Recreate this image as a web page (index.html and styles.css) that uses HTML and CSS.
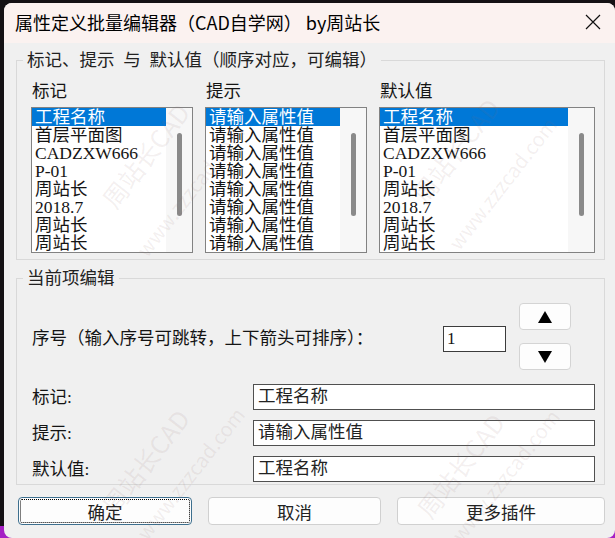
FILE: index.html
```html
<!DOCTYPE html>
<html lang="zh-CN">
<head>
  <meta charset="UTF-8">
  <title>属性定义批量编辑器</title>
  <link rel="stylesheet" href="styles.css">
</head>
<body>
  <div class="window">
    <div class="titlebar">
      <span class="title">属性定义批量编辑器（CAD自学网） by周站长</span>
      <svg class="close" width="16" height="16" viewBox="0 0 16 16">
        <path d="M1 1 L15 15 M15 1 L1 15" stroke="#111" stroke-width="1.2" fill="none"/>
      </svg>
    </div>
    <div class="body">
      <fieldset class="group">
        <legend>标记、提示&ensp;与&ensp;默认值（顺序对应，可编辑）</legend>
        <div class="lists">
          <div class="col">
            <div class="col-label">标记</div>
            <div class="listbox">
              <ul class="items">
                <li class="sel">工程名称</li>
                <li>首层平面图</li>
                <li>CADZXW666</li>
                <li>P-01</li>
                <li>周站长</li>
                <li>2018.7</li>
                <li>周站长</li>
                <li>周站长</li>
              </ul>
              <div class="track"><div class="thumb"></div></div>
            </div>
          </div>
          <div class="col">
            <div class="col-label">提示</div>
            <div class="listbox">
              <ul class="items">
                <li class="sel">请输入属性值</li>
                <li>请输入属性值</li>
                <li>请输入属性值</li>
                <li>请输入属性值</li>
                <li>请输入属性值</li>
                <li>请输入属性值</li>
                <li>请输入属性值</li>
                <li>请输入属性值</li>
              </ul>
              <div class="track"><div class="thumb"></div></div>
            </div>
          </div>
          <div class="col">
            <div class="col-label">默认值</div>
            <div class="listbox">
              <ul class="items">
                <li class="sel">工程名称</li>
                <li>首层平面图</li>
                <li>CADZXW666</li>
                <li>P-01</li>
                <li>周站长</li>
                <li>2018.7</li>
                <li>周站长</li>
                <li>周站长</li>
              </ul>
              <div class="track"><div class="thumb"></div></div>
            </div>
          </div>
        </div>
      </fieldset>

      <fieldset class="group group-edit">
        <legend>当前项编辑</legend>
        <div class="edit">
          <div class="seq-row">
            <span class="seq-label">序号（输入序号可跳转，上下箭头可排序）：</span>
            <div class="seq-input">1</div>
            <div class="arrows">
              <button class="arrow">
                <svg width="14" height="12" viewBox="0 0 14 12"><polygon points="0,12 7,0 14,12" fill="#000"/></svg>
              </button>
              <button class="arrow">
                <svg width="14" height="12" viewBox="0 0 14 12"><polygon points="0,0 14,0 7,12" fill="#000"/></svg>
              </button>
            </div>
          </div>
          <div class="fields">
            <span class="field-label">标记:</span>
            <div class="field">工程名称</div>
            <span class="field-label">提示:</span>
            <div class="field">请输入属性值</div>
            <span class="field-label">默认值:</span>
            <div class="field">工程名称</div>
          </div>
        </div>
      </fieldset>

      <div class="actions">
        <button class="btn btn-default"><span>确定</span></button>
        <button class="btn"><span>取消</span></button>
        <button class="btn"><span>更多插件</span></button>
      </div>
    </div>

    <div class="wm wm-name" style="left:141px;top:152px">周站长CAD</div>
    <div class="wm wm-url" style="left:186px;top:187px">www.zzzcad.com</div>
    <div class="wm wm-name" style="left:451px;top:147px">周站长CAD</div>
    <div class="wm wm-url" style="left:498px;top:180px">www.zzzcad.com</div>
    <div class="wm wm-name" style="left:141px;top:458px">周站长CAD</div>
    <div class="wm wm-url" style="left:186px;top:470px">www.zzzcad.com</div>
    <div class="wm wm-name" style="left:456px;top:462px">周站长CAD</div>
    <div class="wm wm-url" style="left:501px;top:472px">www.zzzcad.com</div>
  </div>
</body>
</html>
```

FILE: styles.css
```css
*{margin: 0;box-sizing: border-box;}
body{
  background: linear-gradient(to top, #a51fc4 0, #a51fc4 12px, #141114 12px);
  height: 538px;
  overflow: hidden;
}
.window{
  position: relative;
  margin: 3px 0 0 4px;
  width: 611px;
  height: 535px;
  background: #f0f0f0;
  border-radius: 8px;
  overflow: hidden;
}
.titlebar{
  height: 40px;
  background: #fbf2f0;
  display: flex;
  align-items: center;
  justify-content: space-between;
  padding: 0 14px 0 11px;
}
.title{
  font-family: "Noto Sans CJK SC", sans-serif;
  font-size: 18px;
  color: #000;
  line-height: 22px;
  padding-bottom: 2px;
}
.close{display: block;margin-top: -2px;}

.body{
  font-family: "Liberation Serif", "Noto Sans CJK SC", serif;
  font-size: 17.5px;
  color: #141414;
  padding: 6px 10px 0 12px;
}
.group{
  border: 1px solid #d9d9d9;
  padding: 0;
  min-width: 0;
  margin: 0;
}
.group legend{
  margin-left: 6px;
  padding: 0 4px;
  line-height: 22px;
  color: #222;
}
.lists{
  display: grid;
  grid-template-columns: 162px 162px 216px;
  column-gap: 12px;
  padding: 9px 9px 6px 14px;
}
.col-label{
  line-height: 22px;
  margin-bottom: 5px;
  padding-left: 1px;
}
.listbox{
  display: flex;
  height: 146px;
  border: 1px solid #828282;
  background: #fff;
}
.items{
  flex: 1;
  list-style: none;
  padding: 0;
  font-size: 17.5px;
  min-width: 0;
}
.items li{
  height: 18px;
  line-height: 18px;
  padding-left: 3px;
  white-space: nowrap;
  overflow: hidden;
}
.items li.sel{
  background: #0078d7;
  color: #fff;
}
.track{
  width: 26px;
  background: #f7f7f7;
}
.thumb{
  width: 5px;
  height: 83px;
  margin: 25px auto 0;
  border-radius: 3px;
  background: #8a8a8a;
}

.group-edit{margin-top: 7px;}
.edit{padding: 14px 9px 2px 15px;}
.seq-row{
  display: flex;
  align-items: center;
}
.seq-label{flex: 1;}
.seq-input{
  width: 63px;
  height: 26px;
  margin: 5px 13px 0 0;
  border: 1px solid #3c3c3c;
  background: #fff;
  padding: 0 3px;
  line-height: 24px;
  font-size: 17px;
}
.arrows{
  display: flex;
  flex-direction: column;
  gap: 13px;
  margin-right: 24px;
}
.arrow{
  width: 52px;
  height: 27px;
  border: 1px solid #d4d4d4;
  border-radius: 4px;
  background: #fdfdfd;
  display: flex;
  align-items: center;
  justify-content: center;
  padding: 0;
}
.fields{
  display: grid;
  grid-template-columns: 221px 1fr;
  grid-auto-rows: 26px;
  row-gap: 10px;
  margin-top: 14px;
}
.field-label{line-height: 26px;}
.field{
  border: 1px solid #505050;
  background: #fff;
  padding: 0 4px;
  line-height: 22px;
  color: #222;
}

.actions{
  display: grid;
  grid-template-columns: 174px 173px 208px;
  column-gap: 16px;
  margin: 12px 0 0 2px;
}
.btn{
  height: 28px;
  border: 1px solid #d0d0d0;
  border-radius: 4px;
  background: #fdfdfd;
  font: inherit;
  color: #222;
  padding: 0;
}
.btn-default{
  border-color: #3d6f8e;
  padding: 1px;
}
.btn-default span{
  display: flex;
  align-items: center;
  justify-content: center;
  height: 100%;
  border: 1px dotted #000;
  border-radius: 2px;
}

.wm{
  position: absolute;
  transform: translate(-50%, -50%) rotate(-52deg);
  font-family: "Noto Sans CJK SC", sans-serif;
  color: rgba(140, 100, 100, 0.1);
  white-space: nowrap;
  pointer-events: none;
}
.wm-name{font-size: 25px;}
.wm-url{font-size: 20px;}
```
